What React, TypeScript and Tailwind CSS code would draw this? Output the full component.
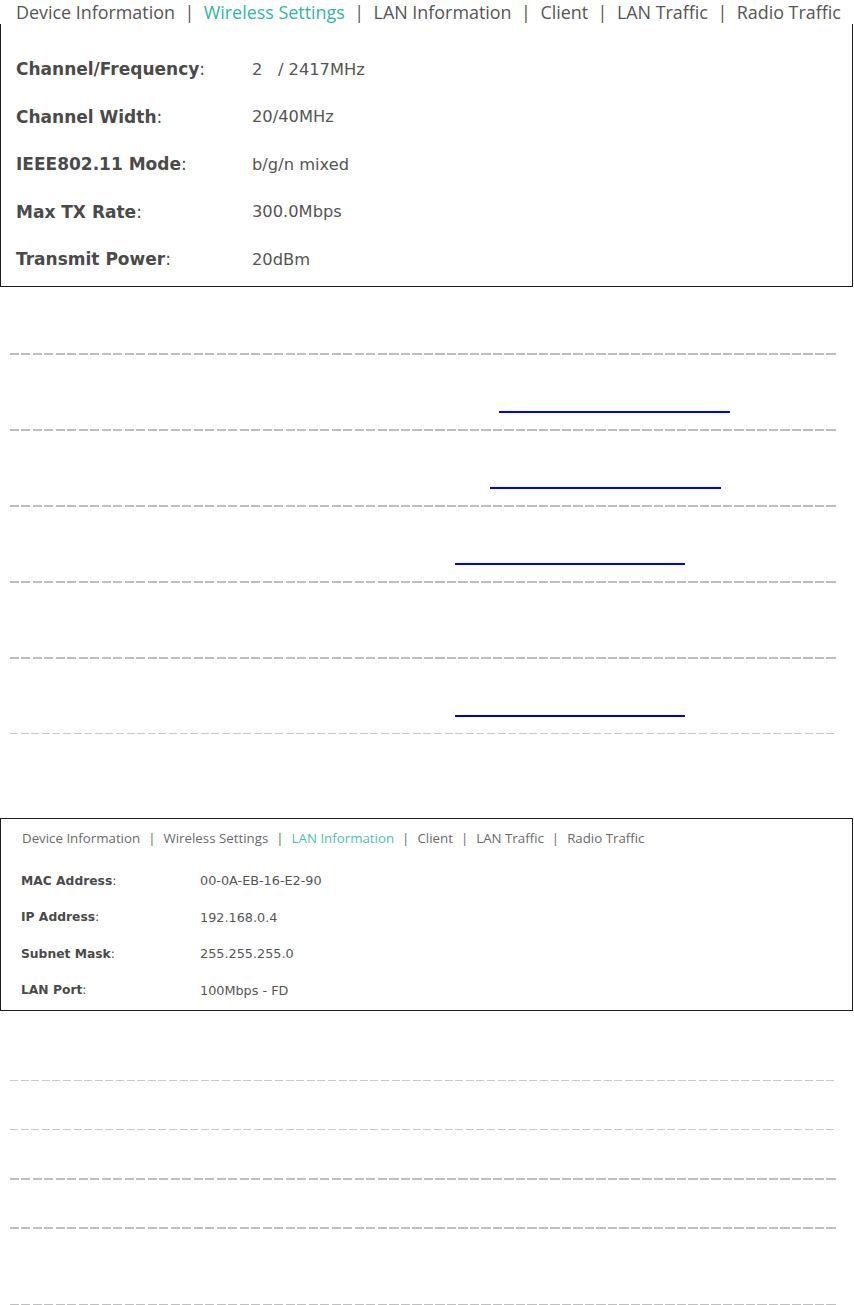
import React from "react";

const tabsFont = "font-['Open_Sans','Noto_Sans',sans-serif]";
const bodyFont = "font-['DejaVu_Sans','Verdana',sans-serif]";

function Tabs({ active, size }: { active: string; size: "lg" | "sm" }) {
  const items = ["Device Information", "Wireless Settings", "LAN Information", "Client", "LAN Traffic", "Radio Traffic"];
  const isLg = size === "lg";
  return (
    <div className={`flex items-center ${tabsFont} ${isLg ? "text-[17.9px] gap-[9.5px] text-[#555555]" : "text-[13.3px] gap-[8px] text-[#6a6a6a]"} whitespace-nowrap`}>
      {items.map((t, i) => (
        <React.Fragment key={t}>
          {i > 0 && <span>|</span>}
          <span className={t === active ? (isLg ? "text-[#2fb6a5]" : "text-[#4cc1b2]") : ""}>{t}</span>
        </React.Fragment>
      ))}
    </div>
  );
}

function Dash({ thick, light }: { thick?: boolean; light?: boolean }) {
  return (
    <div
      className={`ml-[10px] w-[826px] ${thick ? "h-[2px]" : "h-px"} ${
        light
          ? "bg-[repeating-linear-gradient(90deg,#c8c8c8_0px,#c8c8c8_8px,transparent_8px,transparent_10.6px)]"
          : "bg-[repeating-linear-gradient(90deg,#bfbfbf_0px,#bfbfbf_9px,transparent_9px,transparent_11.5px)]"
      }`}
    />
  );
}

export default function App() {
  const topRows: [string, string][] = [
    ["Channel/Frequency", "2\u00a0\u00a0\u00a0/ 2417MHz"],
    ["Channel Width", "20/40MHz"],
    ["IEEE802.11 Mode", "b/g/n mixed"],
    ["Max TX Rate", "300.0Mbps"],
    ["Transmit Power", "20dBm"],
  ];
  const lanRows: [string, string][] = [
    ["MAC Address", "00-0A-EB-16-E2-90"],
    ["IP Address", "192.168.0.4"],
    ["Subnet Mask", "255.255.255.0"],
    ["LAN Port", "100Mbps - FD"],
  ];

  return (
    <div className="w-[854px] min-h-[1305px] bg-white overflow-hidden">
      {/* Top box */}
      <div className="h-[24px] flex items-center pl-[16px]">
        <Tabs active="Wireless Settings" size="lg" />
      </div>
      <div className="w-[853px] border-x border-b border-[#1c1c1c] pb-[2px]">
        <div className={`pt-[22px] ${bodyFont} text-[16.3px]`}>
          {topRows.map(([k, v]) => (
            <div key={k} className="h-[47.5px] flex items-center">
              <div className="w-[251px] pl-[15px] text-[#4a4a4a] text-[17px]">
                <span className="font-bold">{k}</span>:
              </div>
              <div className="text-[#555555]">{v}</div>
            </div>
          ))}
        </div>
      </div>

      {/* dashed area */}
      <div className="mt-[66px] flex flex-col">
        <div className="h-[76px] flex flex-col">
          <Dash thick />
          <div className="mt-[56px] ml-[499px] w-[231px] h-[2px] bg-[#0000ff]" />
        </div>
        <div className="h-[76px] flex flex-col">
          <Dash thick />
          <div className="mt-[56px] ml-[490px] w-[231px] h-[2px] bg-[#0000ff]" />
        </div>
        <div className="h-[76px] flex flex-col">
          <Dash thick />
          <div className="mt-[56px] ml-[455px] w-[230px] h-[2px] bg-[#0000ff]" />
        </div>
        <div className="h-[76px] flex flex-col">
          <Dash thick />
        </div>
        <div className="h-[76px] flex flex-col">
          <Dash thick />
          <div className="mt-[56px] ml-[455px] w-[230px] h-[2px] bg-[#0000cc]" />
        </div>
        <Dash light />
      </div>

      {/* LAN box */}
      <div className="mt-[84px] w-[853px] border border-[#1c1c1c] pb-[1px]">
        <div className="h-[40px] flex items-center pl-[21px]">
          <Tabs active="LAN Information" size="sm" />
        </div>
        <div className={`mt-[4px] ${bodyFont} text-[12.8px]`}>
          {lanRows.map(([k, v]) => (
            <div key={k} className="h-[36.5px] flex items-center">
              <div className="w-[199px] pl-[20px] text-[#4a4a4a] text-[12.3px]">
                <span className="font-bold">{k}</span>:
              </div>
              <div className="text-[#555555]">{v}</div>
            </div>
          ))}
        </div>
      </div>

      {/* bottom dashes */}
      <div className="mt-[69px] flex flex-col">
        <div className="h-[49px]"><Dash light /></div>
        <div className="h-[49px]"><Dash light /></div>
        <div className="h-[49px]"><Dash thick /></div>
        <div className="h-[77px]"><Dash thick /></div>
        <Dash thick />
      </div>
    </div>
  );
}
